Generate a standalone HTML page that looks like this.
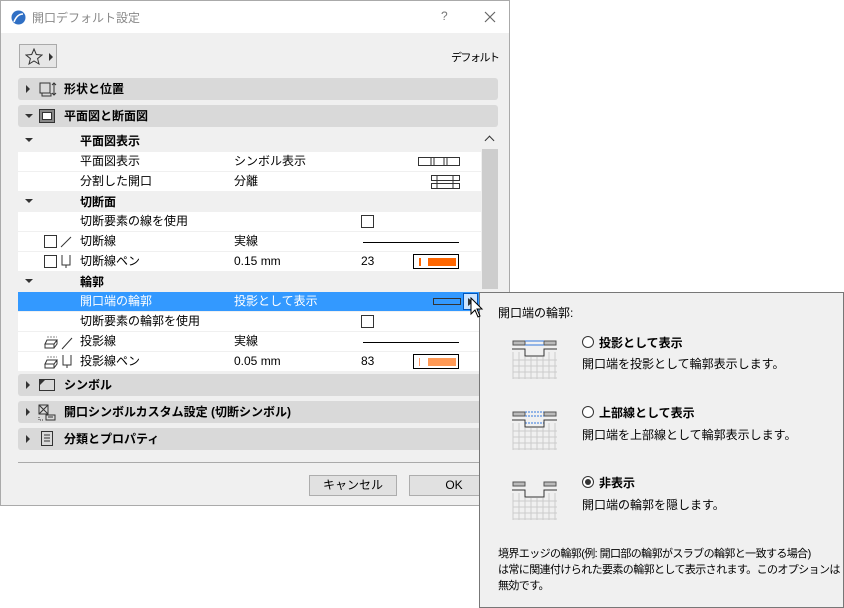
<!DOCTYPE html>
<html><head><meta charset="utf-8"><style>
*{margin:0;padding:0;box-sizing:border-box}
body{width:844px;height:608px;background:#fff;font-family:"Liberation Sans","Noto Sans CJK JP",sans-serif;font-size:12px;color:#000;position:relative;overflow:hidden;white-space:nowrap}
.a{position:absolute}
.dlg{left:0;top:0;width:510px;height:506px;background:#f0f0f0;border:1px solid #aaa}
.title{left:0;top:0;width:508px;height:32px;background:#fff}
.sec{position:absolute;left:17px;width:480px;height:22px;background:#d9d9d9;border-radius:3px;font-weight:bold;line-height:22px}
.sec .t{position:absolute;left:46px}
.tri{position:absolute;left:8px;top:7px;width:0;height:0;border-left:4px solid #333;border-top:4px solid transparent;border-bottom:4px solid transparent}
.trd{position:absolute;left:7px;top:9px;width:0;height:0;border-top:4px solid #333;border-left:4px solid transparent;border-right:4px solid transparent}
.row{position:absolute;left:17px;width:463px;height:19px;background:#fff;line-height:19px}
.sub{position:absolute;left:17px;width:463px;height:20px;background:#f0f0f0;line-height:20px;font-weight:bold}
.c1{position:absolute;left:62px}.c2{position:absolute;left:216px}.c3{position:absolute;left:343px}
.cb{position:absolute;left:343px;top:3px;width:13px;height:13px;border:1px solid #333;background:#fff}
.line{position:absolute;left:345px;top:10px;width:96px;height:1px;background:#000}
.pen{position:absolute;left:395px;top:2px;width:46px;height:15px;border:1px solid #000;background:#fff}
.btn{position:absolute;height:21px;border:1px solid #adadad;background:#e1e1e1;text-align:center;line-height:19px}
.pop{left:479px;top:292px;width:365px;height:316px;background:#f0f0f0;border:1px solid #777}
</style></head><body>
<div class="a dlg">
 <div class="a title">
  <svg class="a" style="left:10px;top:9px" width="15" height="15"><circle cx="7.5" cy="7.5" r="7" fill="#2f6fc4"/><path d="M3 12 Q6 4 12 4" stroke="#fff" stroke-width="1.6" fill="none"/></svg>
  <span class="a" style="left:31px;top:8px;color:#888">開口デフォルト設定</span>
  <span class="a" style="left:440px;top:8px;color:#777">?</span>
  <svg class="a" style="left:483px;top:10px" width="12" height="12"><path d="M1 1L11 11M11 1L1 11" stroke="#666" stroke-width="1.2"/></svg>
 </div>
 <div class="a" style="left:18px;top:43px;width:38px;height:24px;border:1px solid #aaa;background:#e6e6e6">
  <svg class="a" style="left:5px;top:3px" width="18" height="17"><path d="M9 1L11.3 6.5 17 7 12.6 10.6 14 16 9 13 4 16 5.4 10.6 1 7 6.7 6.5Z" fill="none" stroke="#333"/></svg>
  <div class="a" style="left:29px;top:8px;border-left:4px solid #333;border-top:4px solid transparent;border-bottom:4px solid transparent"></div>
 </div>
 <span class="a" style="left:450px;top:48px;font-size:11px;letter-spacing:-1.5px">デフォルト</span>
 <div class="sec" style="top:77px"><div class="tri"></div><svg class="a" style="left:21px;top:4px" width="18" height="15"><rect x="1" y="1" width="10" height="10" fill="none" stroke="#333"/><path d="M3 11v3h9v-3M15 1v12M13 3l2-2 2 2M13 11l2 2 2-2" stroke="#333" fill="none"/></svg><span class="t">形状と位置</span></div>
 <div class="sec" style="top:104px"><div class="trd"></div><svg class="a" style="left:21px;top:4px" width="16" height="14"><rect x="0.5" y="0.5" width="15" height="13" fill="#888" stroke="#333"/><rect x="3.5" y="3.5" width="9" height="7" fill="#fff" stroke="#333"/></svg><span class="t">平面図と断面図</span></div>
 <div class="sub" style="top:130px"><div class="trd" style="top:7px"></div><span class="c1">平面図表示</span></div>
 <div class="row" style="top:151px"><span class="c1">平面図表示</span><span class="c2">シンボル表示</span><svg class="a" style="left:400px;top:4px" width="42" height="11"><rect x="0.5" y="1.5" width="41" height="8" fill="none" stroke="#333"/><path d="M13 1v9M16 1v9M26 1v9M29 1v9" stroke="#333"/></svg></div>
 <div class="row" style="top:171px"><span class="c1">分割した開口</span><span class="c2">分離</span><svg class="a" style="left:413px;top:2px" width="29" height="16"><rect x="0.5" y="1.5" width="28" height="5" fill="none" stroke="#333"/><rect x="0.5" y="9.5" width="28" height="5" fill="none" stroke="#333"/><path d="M6 1v14M22 1v14" stroke="#333"/></svg></div>
 <div class="sub" style="top:191px"><div class="trd" style="top:7px"></div><span class="c1">切断面</span></div>
 <div class="row" style="top:211px"><span class="c1">切断要素の線を使用</span><div class="cb"></div></div>
 <div class="row" style="top:231px"><div class="a" style="left:26px;top:3px;width:13px;height:13px;border:1px solid #333"></div><svg class="a" style="left:42px;top:3px" width="12" height="13"><path d="M1 12L11 2" stroke="#333"/></svg><span class="c1">切断線</span><span class="c2">実線</span><div class="line"></div></div>
 <div class="row" style="top:251px"><div class="a" style="left:26px;top:3px;width:13px;height:13px;border:1px solid #333"></div><svg class="a" style="left:42px;top:2px" width="12" height="15"><path d="M2 1v10h8V1M6 11v3" stroke="#333" fill="none"/></svg><span class="c1">切断線ペン</span><span class="c2">0.15 mm</span><span class="c3">23</span><div class="pen"><div class="a" style="left:5px;top:3px;width:2px;height:8px;background:#f60"></div><div class="a" style="left:14px;top:3px;width:28px;height:8px;background:#f60"></div></div></div>
 <div class="sub" style="top:271px"><div class="trd" style="top:7px"></div><span class="c1">輪郭</span></div>
 <div class="row" style="top:291px;background:#3399ff;color:#fff"><span class="c1">開口端の輪郭</span><span class="c2">投影として表示</span><svg class="a" style="left:415px;top:5px" width="28" height="9"><rect x="0.5" y="1.5" width="27" height="6" fill="none" stroke="#333"/></svg><div class="a" style="left:445px;top:1px;width:15px;height:17px;border:1px solid #0055bb;background:#cce4ff"><div class="a" style="left:4px;top:4px;border-left:5px solid #333;border-top:4px solid transparent;border-bottom:4px solid transparent"></div></div></div>
 <div class="row" style="top:311px"><span class="c1">切断要素の輪郭を使用</span><div class="cb"></div></div>
 <div class="row" style="top:331px"><svg class="a" style="left:26px;top:2px" width="30" height="16"><path d="M3 6h10l-3 4H1zM1 10v4h9v-4M13 6v4l-3 4" stroke="#333" fill="none"/><path d="M3 3h10" stroke="#888" stroke-dasharray="2 1"/><path d="M18 15L28 4" stroke="#333"/></svg><span class="c1">投影線</span><span class="c2">実線</span><div class="line"></div></div>
 <div class="row" style="top:351px"><svg class="a" style="left:26px;top:2px" width="30" height="16"><path d="M3 6h10l-3 4H1zM1 10v4h9v-4M13 6v4l-3 4" stroke="#333" fill="none"/><path d="M3 3h10" stroke="#888" stroke-dasharray="2 1"/><path d="M19 1v10h8V1M23 11v3" stroke="#333" fill="none"/></svg><span class="c1">投影線ペン</span><span class="c2">0.05 mm</span><span class="c3">83</span><div class="pen"><div class="a" style="left:5px;top:3px;width:1px;height:8px;background:#f96"></div><div class="a" style="left:14px;top:3px;width:28px;height:8px;background:#f95"></div></div></div>
 <div class="a" style="left:481px;top:130px;width:16px;height:241px;background:#f0f0f0"><div class="a" style="left:4px;top:6px;width:7px;height:7px;border-left:1.5px solid #333;border-top:1.5px solid #333;transform:rotate(45deg)"></div><div class="a" style="left:0;top:18px;width:16px;height:140px;background:#cdcdcd"></div></div>
 <div class="sec" style="top:373px"><div class="tri"></div><svg class="a" style="left:21px;top:4px" width="17" height="14"><rect x="0.5" y="1.5" width="15" height="11" fill="none" stroke="#333"/><path d="M1 2h5l-5 5z" fill="#333"/></svg><span class="t">シンボル</span></div>
 <div class="sec" style="top:400px"><div class="tri"></div><svg class="a" style="left:20px;top:3px" width="18" height="17"><rect x="1" y="1" width="9" height="9" fill="none" stroke="#333"/><path d="M1 1l9 9M10 1L1 10M8 11h9v5H8zM10 13h5" stroke="#333" fill="none"/><path d="M1 13v3h4" stroke="#333" stroke-dasharray="1 1" fill="none"/></svg><span class="t">開口シンボルカスタム設定 (切断シンボル)</span></div>
 <div class="sec" style="top:427px"><div class="tri"></div><svg class="a" style="left:23px;top:3px" width="13" height="16"><rect x="0.5" y="0.5" width="11" height="14" fill="none" stroke="#333"/><path d="M3 4h6M3 7h6M3 10h6" stroke="#333"/></svg><span class="t">分類とプロパティ</span></div>
 <div class="a" style="left:17px;top:461px;width:480px;height:1px;background:#aaa"></div>
 <div class="btn" style="left:308px;top:474px;width:88px">キャンセル</div>
 <div class="btn" style="left:408px;top:474px;width:90px">OK</div>
</div>
<div class="a pop">
 <span class="a" style="left:18px;top:11px">開口端の輪郭:</span>
 <svg class="a" style="left:32px;top:47px" width="46" height="40"><g stroke="#ccc"><path d="M1 12v27M7 12v27M13 17v22M19 17v22M25 17v22M31 17v22M37 12v27M43 12v27M1 20h44M1 26h44M1 32h44M1 38h44"/></g><rect x="1" y="1" width="12" height="4" fill="#bbb" stroke="#555"/><rect x="32" y="1" width="12" height="4" fill="#bbb" stroke="#555"/><path d="M13 1h19M13 5h19" stroke="#3377dd"/><path d="M0 9h13v7h19v-7h13" stroke="#333" fill="none"/></svg>
 <svg class="a" style="left:32px;top:118px" width="46" height="40"><g stroke="#ccc"><path d="M1 12v27M7 12v27M13 17v22M19 17v22M25 17v22M31 17v22M37 12v27M43 12v27M1 20h44M1 26h44M1 32h44M1 38h44"/></g><rect x="1" y="1" width="12" height="4" fill="#bbb" stroke="#555"/><rect x="32" y="1" width="12" height="4" fill="#bbb" stroke="#555"/><path d="M13 1h19M13 5h19M13 12h19" stroke="#3377dd" stroke-dasharray="2 1"/><path d="M0 9h13v7h19v-7h13" stroke="#333" fill="none"/></svg>
 <svg class="a" style="left:32px;top:188px" width="46" height="40"><g stroke="#ccc"><path d="M1 12v27M7 12v27M13 17v22M19 17v22M25 17v22M31 17v22M37 12v27M43 12v27M1 20h44M1 26h44M1 32h44M1 38h44"/></g><rect x="1" y="1" width="12" height="4" fill="#bbb" stroke="#555"/><rect x="32" y="1" width="12" height="4" fill="#bbb" stroke="#555"/><path d="M0 9h13v7h19v-7h13" stroke="#333" fill="none"/></svg>
 <div class="a" style="left:102px;top:43px;width:12px;height:12px;border:1px solid #333;border-radius:50%;background:#fff"></div>
 <b class="a" style="left:119px;top:41px">投影として表示</b>
 <span class="a" style="left:102px;top:62px">開口端を投影として輪郭表示します。</span>
 <div class="a" style="left:102px;top:113px;width:12px;height:12px;border:1px solid #333;border-radius:50%;background:#fff"></div>
 <b class="a" style="left:119px;top:111px">上部線として表示</b>
 <span class="a" style="left:102px;top:133px">開口端を上部線として輪郭表示します。</span>
 <div class="a" style="left:102px;top:183px;width:12px;height:12px;border:1px solid #333;border-radius:50%;background:#fff"><div class="a" style="left:2px;top:2px;width:6px;height:6px;border-radius:50%;background:#333"></div></div>
 <b class="a" style="left:119px;top:181px">非表示</b>
 <span class="a" style="left:102px;top:203px">開口端の輪郭を隠します。</span>
 <div class="a" style="left:18px;top:253px;width:345px;line-height:16px;font-size:11px;letter-spacing:-0.6px">境界エッジの輪郭(例: 開口部の輪郭がスラブの輪郭と一致する場合)<br>は常に関連付けられた要素の輪郭として表示されます。このオプションは<br>無効です。</div>
</div>
<svg class="a" style="left:470px;top:297px" width="14" height="22"><path d="M1 1v16l4-4 3 7 2-1-3-7h5z" fill="#fff" stroke="#000"/></svg>
</body></html>
